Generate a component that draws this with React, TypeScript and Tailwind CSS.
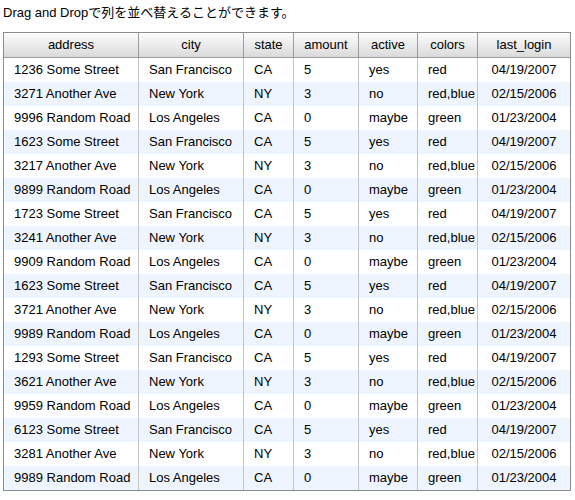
const columns = [
  { key: "address", label: "address", width: "w-[135px]" },
  { key: "city", label: "city", width: "w-[105px]" },
  { key: "state", label: "state", width: "w-[50px]" },
  { key: "amount", label: "amount", width: "w-[65px]" },
  { key: "active", label: "active", width: "w-[59px]" },
  { key: "colors", label: "colors", width: "w-[60px]" },
  { key: "last_login", label: "last_login", width: "w-[92px]" },
];

type Row = {
  address: string;
  city: string;
  state: string;
  amount: string;
  active: string;
  colors: string;
  last_login: string;
};

const sf = (address: string): Row => ({
  address,
  city: "San Francisco",
  state: "CA",
  amount: "5",
  active: "yes",
  colors: "red",
  last_login: "04/19/2007",
});
const ny = (address: string): Row => ({
  address,
  city: "New York",
  state: "NY",
  amount: "3",
  active: "no",
  colors: "red,blue",
  last_login: "02/15/2006",
});
const la = (address: string): Row => ({
  address,
  city: "Los Angeles",
  state: "CA",
  amount: "0",
  active: "maybe",
  colors: "green",
  last_login: "01/23/2004",
});

const rows: Row[] = [
  sf("1236 Some Street"),
  ny("3271 Another Ave"),
  la("9996 Random Road"),
  sf("1623 Some Street"),
  ny("3217 Another Ave"),
  la("9899 Random Road"),
  sf("1723 Some Street"),
  ny("3241 Another Ave"),
  la("9909 Random Road"),
  sf("1623 Some Street"),
  ny("3721 Another Ave"),
  la("9989 Random Road"),
  sf("1293 Some Street"),
  ny("3621 Another Ave"),
  la("9959 Random Road"),
  sf("6123 Some Street"),
  ny("3281 Another Ave"),
  la("9989 Random Road"),
];

export default function App() {
  return (
    <div className="w-[575px] h-[500px] bg-white text-black font-['Liberation_Sans',Arial,'Noto_Sans_CJK_JP',sans-serif] text-[13px]">
      <p className="pl-[3px] pt-[5px] h-[32px] leading-[15px]">
        Drag and Dropで列を並べ替えることができます。
      </p>
      <div className="ml-[3px] w-[568px] border border-[#8c8c8c]">
        <table className="w-[566px] table-fixed border-separate border-spacing-0">
          <colgroup>
            {columns.map((c) => (
              <col key={c.key} className={c.width} />
            ))}
          </colgroup>
          <thead>
            <tr>
              {columns.map((c, i) => (
                <th
                  key={c.key}
                  className={`h-[25px] p-0 font-normal text-center bg-gradient-to-b from-[#fdfdfd] to-[#dadada] border-b border-[#9a9a9a] ${
                    i < columns.length - 1 ? "border-r" : ""
                  }`}
                >
                  {c.label}
                </th>
              ))}
            </tr>
          </thead>
          <tbody>
            {rows.map((row, r) => (
              <tr
                key={`row-${r}`}
                className={r % 2 === 1 ? "bg-[#eef5fe]" : "bg-white"}
              >
                {columns.map((c, i) => (
                  <td
                    key={c.key}
                    className={`h-[24px] p-0 whitespace-nowrap overflow-hidden border-[#c4c4c4] ${
                      i < columns.length - 1 ? "border-r" : ""
                    } ${c.key === "last_login" ? "text-center" : "pl-[10px]"}`}
                  >
                    {row[c.key as keyof Row]}
                  </td>
                ))}
              </tr>
            ))}
          </tbody>
        </table>
      </div>
    </div>
  );
}
